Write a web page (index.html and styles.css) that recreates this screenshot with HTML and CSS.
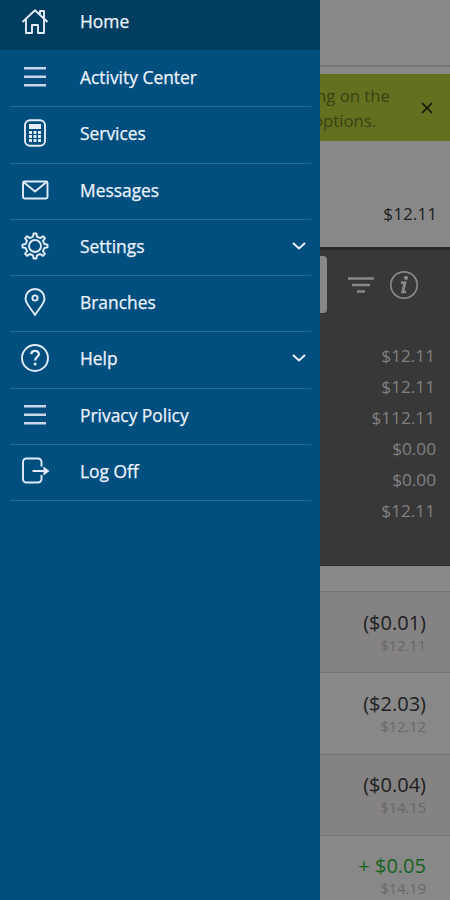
FILE: index.html
```html
<!DOCTYPE html>
<html lang="en">
<head>
<meta charset="utf-8">
<title>Accounts</title>
<link rel="stylesheet" href="styles.css">
</head>
<body>
<div class="app">
  <nav class="menu">
    <a class="item active"><svg class="icon" viewBox="0 0 30 30"><path d="M2.5 16 15 4.2 27.5 16M6 13.5V27h6v-8h6v8h6V13.5M20 8V5h4v7.5"/></svg><span>Home</span></a>
    <a class="item"><svg class="icon bars" viewBox="0 0 30 30"><path d="M4 6.3h22M4 14.8h22M4 23.2h22"/></svg><span>Activity Center</span></a>
    <a class="item"><svg class="icon" viewBox="0 0 30 30"><rect x="5" y="2.2" width="20" height="25.5" rx="5"/><path class="fill" d="M9 6h12v5H9zM9 13h3v3H9zm4.5 0h3v3h-3zM18 13h3v3h-3zM9 17h3v3H9zm4.5 0h3v3h-3zM18 17h3v3h-3zM9 21h3v3H9zm4.5 0h3v3h-3zM18 21h3v3h-3z"/></svg><span>Services</span></a>
    <a class="item"><svg class="icon" viewBox="0 0 30 30"><rect x="3" y="6.5" width="24.5" height="17" rx="1.5"/><path d="m4 7.5 11 9 11-9"/></svg><span>Messages</span></a>
    <a class="item"><svg class="icon" viewBox="0 0 30 30"><circle cx="15" cy="15" r="6"/><path d="M13 5.7 13.6 2.500h2.800L17 5.700l3.200 1.400 2.700-1.900 2 2-1.900 2.700L24.300 13l3.200.6v2.800l-3.200.6-1.300 3.200 1.900 2.700-2 2-2.700-1.900-3.200 1.300-.6 3.200h-2.800l-.6-3.200-3.200-1.300-2.700 1.900-2-2L7 20.200 5.700 17l-3.200-.6v-2.800l3.200-.6L7 9.900 5.100 7.200l2-2 2.700 1.900z"/></svg><span>Settings</span><svg class="chevron" viewBox="0 0 16 12"><path d="m2 3 6 5.500L14 3"/></svg></a>
    <a class="item"><svg class="icon" viewBox="0 0 30 30"><path d="M15 28C12 22.500 5.500 17 5.500 11.500a9.500 9.500 0 0 1 19 0C24.500 17 18 22.500 15 28z"/><circle cx="15" cy="11" r="2.600"/></svg><span>Branches</span></a>
    <a class="item"><svg class="icon" viewBox="0 0 30 30"><circle cx="15" cy="15" r="13"/><path class="thick" d="M11.200 11.200c.5-4.500 8-4.200 7.600.2-.3 3-3.700 2.500-3.700 6.100"/><circle class="fill" cx="15.1" cy="21" r="1.5"/></svg><span>Help</span><svg class="chevron" viewBox="0 0 16 12"><path d="m2 3 6 5.500L14 3"/></svg></a>
    <a class="item"><svg class="icon bars" viewBox="0 0 30 30"><path d="M4 6.300h22M4 14.800h22M4 23.200h22"/></svg><span>Privacy Policy</span></a>
    <a class="item"><svg class="icon" viewBox="0 0 30 30"><path d="M21.500 10.500V6a3.500 3.500 0 0 0-3.500-3.500H6.500A3.500 3.500 0 0 0 3 6v17a3.500 3.500 0 0 0 3.500 3.500H18a3.500 3.500 0 0 0 3.500-3.500v-4M12.500 15h12"/><path class="fill" d="m23.500 10.500 6 4.500-6 4.500z"/></svg><span>Log Off</span></a>
  </nav>
  <main class="page">
    <header class="topbar"></header>
    <div class="notice">
      <p>ng on the<br><span class="second">options.</span></p>
      <svg class="close" viewBox="0 0 14 14"><path d="m2 2 10 10M12 2 2 12"/></svg>
    </div>
    <div class="balance">$12.11</div>
    <section class="summary">
      <div class="tools">
        <span class="field"></span>
        <svg class="filter" viewBox="0 0 26 18"><path d="M0 2.500h26M4 9h18M9 15.500h8"/></svg>
        <svg class="info" viewBox="0 0 30 30"><circle cx="15" cy="15" r="13.200"/><path class="stem" d="M12 12.600h4l-2.300 9.200h3.500"/><circle class="dot" cx="17" cy="7.900" r="2.100"/></svg>
      </div>
      <ul class="totals"><li>$12.11</li><li>$12.11</li><li>$112.11</li><li class="wide">$0.00</li><li class="wide">$0.00</li><li>$12.11</li></ul>
    </section>
    <section class="history">
      <div class="row"><b>($0.01)</b><small>$12.11</small></div>
      <div class="row"><b>($2.03)</b><small>$12.12</small></div>
      <div class="row"><b>($0.04)</b><small>$14.15</small></div>
      <div class="row"><b class="credit">+ $0.05</b><small>$14.19</small></div>
    </section>
  </main>
</div>
</body>
</html>
```
FILE: styles.css
```css
* { box-sizing: border-box; }
body { margin: 0; font-family: "Open Sans", "Noto Sans", sans-serif; }
.app { display: grid; grid-template-columns: 320px 130px; height: 900px; overflow: hidden; }
.menu { background: #004f7e; color: #eef3ff; }
.item { display: grid; grid-template-columns: 30px 1fr 16px; column-gap: 30px; align-items: center; height: 56.25px; margin: 0 9px 0 10px; padding: 0 4px 3px 10px; border-bottom: 1px solid #226b96; font-size: 17.4px; line-height: 24px; font-weight: 500; -webkit-text-stroke: .25px #eef3ff; white-space: nowrap; }
.item.active { height: 50px; margin: 0 0 1px; padding: 0 13px 8px 20px; background: #003d5f; border: 0; }
.item .chevron { width: 16px; height: 12px; }
.icon { width: 30px; height: 30px; fill: none; stroke: #e4ebfa; stroke-width: 1.9; stroke-linejoin: round; }
.icon .fill { fill: #e4ebfa; stroke: none; }
.icon .thick { stroke-width: 2.3; }
.bars { stroke: #cbd8eb; stroke-width: 2.4; }
.chevron { fill: none; stroke: #eef3ff; stroke-width: 2; }
.page { display: flex; flex-direction: column; background: #888; overflow: hidden; }
.topbar { height: 67px; border-bottom: 2px solid #777; flex: none; }
.notice { display: flex; justify-content: space-between; align-items: center; flex: none; height: 67px; margin-top: 7px; padding-right: 16px; background: #627020; color: #394212; }
.notice p { margin: 0 0 0 -4px; font-size: 16.7px; line-height: 25px; white-space: nowrap; }
.second { margin-left: -3px; }
.close { width: 14px; height: 14px; fill: none; stroke: #111507; stroke-width: 1.7; }
.balance { flex: none; height: 106px; padding: 61px 13px 0 0; text-align: right; font-size: 17.2px; line-height: 24px; color: #202020; }
.summary { flex: none; height: 319px; background: #383838; border-top: 3px solid #282828; border-bottom: 1px solid #292929; color: #808080; }
.tools { display: flex; align-items: center; height: 69px; }
.field { width: 7px; height: 57px; background: #888; border-radius: 0 4px 4px 0; }
.filter { width: 26px; height: 18px; margin-left: 21px; stroke: #888; stroke-width: 2.6; }
.info { width: 30px; height: 30px; margin-left: 15px; fill: none; stroke: #888; stroke-width: 1.7; }
.stem { stroke-width: 2.8; }
.dot { fill: #888; stroke: none; }
.totals { list-style: none; margin: 0; padding: 21px 15px 0 0; font-size: 17.2px; line-height: 31px; text-align: right; }
.totals .wide { margin-right: -1px; }
.history { flex: none; padding-top: 25px; }
.row { display: flex; flex-direction: column; align-items: flex-end; height: 81.3px; border-top: 1px solid #747474; padding: 16.5px 24px 0 0; }
.row:nth-child(odd) { background: #848283; }
.row b { font-weight: 400; font-size: 20px; line-height: 27px; color: #202020; }
.row .credit { color: #17621d; }
.row small { font-size: 14.6px; line-height: 19px; color: #676767; }
```
